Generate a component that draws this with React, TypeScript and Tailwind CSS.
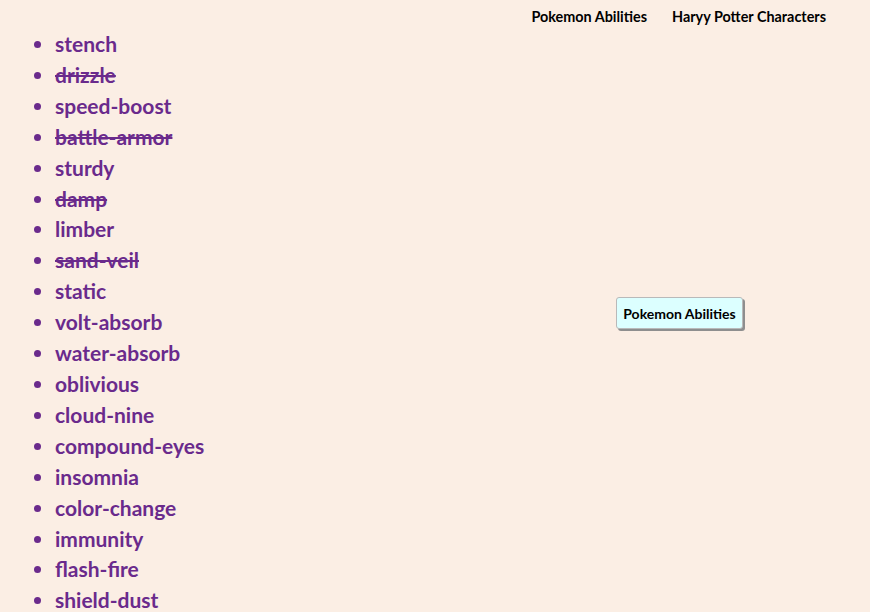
import { useState } from 'react';

const abilities = [
  { name: 'stench', done: false },
  { name: 'drizzle', done: true },
  { name: 'speed-boost', done: false },
  { name: 'battle-armor', done: true },
  { name: 'sturdy', done: false },
  { name: 'damp', done: true },
  { name: 'limber', done: false },
  { name: 'sand-veil', done: true },
  { name: 'static', done: false },
  { name: 'volt-absorb', done: false },
  { name: 'water-absorb', done: false },
  { name: 'oblivious', done: false },
  { name: 'cloud-nine', done: false },
  { name: 'compound-eyes', done: false },
  { name: 'insomnia', done: false },
  { name: 'color-change', done: false },
  { name: 'immunity', done: false },
  { name: 'flash-fire', done: false },
  { name: 'shield-dust', done: false },
];

export default function App() {
  const [items, setItems] = useState(abilities);

  const toggle = (i: number) =>
    setItems((prev) => prev.map((it, idx) => (idx === i ? { ...it, done: !it.done } : it)));

  return (
    <div className="min-h-screen bg-[#fbeee4] font-['Lato',sans-serif]">
      {/* Nav */}
      <nav className="flex justify-end gap-[25px] pr-[44px] pt-[6px] h-[26px] text-[14.4px] font-bold text-black">
        <a className="cursor-pointer">Pokemon Abilities</a>
        <a className="cursor-pointer">Haryy Potter Characters</a>
      </nav>

      <div className="flex">
        {/* List */}
        <ul className="list-disc pl-[55px] pt-[3px] w-[489px] text-[#6a2a8c] text-[21px] font-bold leading-[30.9px] marker:text-[#6a2a8c]">
          {items.map((it, i) => (
            <li
              key={it.name}
              onClick={() => toggle(i)}
              className={it.done ? 'line-through decoration-2 cursor-pointer' : 'cursor-pointer'}
            >
              {it.name}
            </li>
          ))}
        </ul>

        {/* Tab button */}
        <div className="flex-1 flex justify-center pt-[271px]">
          <div>
            <button className="px-[6px] h-[32px] text-[14px] font-bold text-black bg-[#dcffff] border border-[#b9b9b9] rounded-[3px] shadow-[2px_2px_0_#8e8e8e]">
              Pokemon Abilities
            </button>
          </div>
        </div>
      </div>
    </div>
  );
}
